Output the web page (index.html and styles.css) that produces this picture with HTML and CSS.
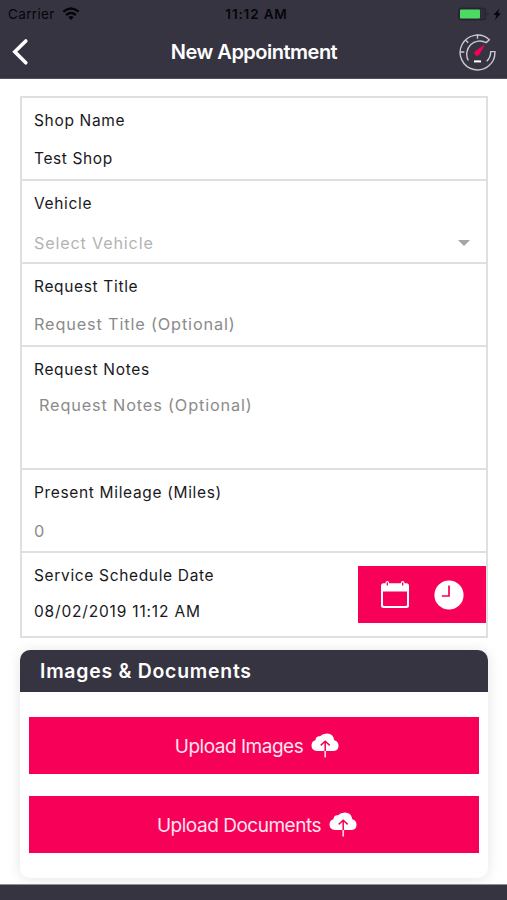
FILE: index.html
```html
<!DOCTYPE html>
<html lang="en">
<head>
<meta charset="utf-8">
<title>New Appointment</title>
<link rel="stylesheet" href="styles.css">
</head>
<body>
<header class="top">
  <div class="status">
    <div class="carrier"><span>Carrier</span>
      <svg width="18" height="14" viewBox="0 0 18 14" fill="none" stroke="#050507" stroke-width="2.4"><path d="M1.3 4.7Q9 -1.7 16.7 4.7"/><path d="M4.1 8Q9 3.8 13.9 8"/><path d="M6.3 10.2Q9 8 11.7 10.2L9 13Z" fill="#050507" stroke="none"/></svg>
    </div>
    <span class="clock">11:12 AM</span>
    <svg class="battery" width="44" height="14" viewBox="0 0 44 14"><rect x=".7" y="1.2" width="27" height="11.6" rx="2.5" fill="#302d38" stroke="#23212a"/><rect x="2" y="2.5" width="20" height="9" rx="1" fill="#4cd964"/><path d="M29.5 5q2 2 0 4z" fill="#23212a"/><path d="M41.5 1.5L35.5 8h3l-1.5 5 6-6.7h-3z" fill="#050507"/></svg>
  </div>
  <nav class="bar">
    <svg class="back" width="18" height="28" viewBox="0 0 18 28" fill="none" stroke="#fff" stroke-width="3.6" stroke-linecap="round"><path d="M14.8 3L3.8 13.8l11 11"/></svg>
    <h1>New Appointment</h1>
    <svg class="gauge" width="38" height="38" viewBox="0 0 38 38" fill="none" stroke="#c9c7d0" stroke-width="1.4"><path d="M10.3 27.5A13.2 13.2 0 0 1 28.2 9.6L31.3 6.7A17.4 17.4 0 1 0 36.9 18.6H32.7A13.4 13.4 0 0 1 28.7 28.2"/><path d="M19.5 1.6V5.8M2.1 19H6.3M7.2 6.7L10.2 9.7"/><path d="M26 12.5L16.5 19.2l1 2.8 3 .2z" fill="#f70057" stroke="#f70057" stroke-width="1"/><path d="M16 28.4H23" stroke="#fff" stroke-width="2"/></svg>
  </nav>
</header>
<main>
  <section class="form">
    <div class="row"><label>Shop Name</label><p class="value">Test Shop</p></div>
    <div class="row"><label>Vehicle</label><div class="value select"><span>Select Vehicle</span><i class="caret"></i></div></div>
    <div class="row"><label>Request Title</label><p class="value hint">Request Title (Optional)</p></div>
    <div class="row notes"><label>Request Notes</label><p class="value hint">Request Notes (Optional)</p></div>
    <div class="row mileage"><label>Present Mileage (Miles)</label><p class="value hint">0</p></div>
    <div class="row date">
      <div><label>Service Schedule Date</label><p class="value">08/02/2019 11:12 AM</p></div>
      <div class="pickers">
        <svg width="30" height="28" viewBox="0 0 30 28"><path fill="#fff" fill-rule="evenodd" d="M3.5 2.3H26.5Q29 2.3 29 5V24.5Q29 27 26.5 27H3.5Q1 27 1 24.5V5Q1 2.3 3.5 2.3ZM3 10.5V23.7Q3 25 4.3 25H25.7Q27 25 27 23.7V10.5Z"/><path d="M7.3 1.8V3.4M22.7 1.8V3.4" stroke="#fff" stroke-width="3.6" stroke-linecap="round"/><path d="M7.3 1.8V4M22.7 1.8V4" stroke="#f70057" stroke-width="1.3" stroke-linecap="round"/></svg>
        <svg width="30" height="30" viewBox="0 0 30 30"><circle cx="15" cy="15" r="14.6" fill="#fff"/><path d="M15 5.5V16H7.8" fill="none" stroke="#f70057" stroke-width="1.7"/></svg>
      </div>
    </div>
  </section>
  <section class="card">
    <h2>Images &amp; Documents</h2>
    <div class="actions">
      <div class="button"><span>Upload Images</span><svg width="28" height="25" viewBox="0 0 28 25"><path d="M6 18Q.5 17.4 .5 12.5.5 8.3 4.4 7.2 4.8 2.9 9 3.3 11.5.6 16 .6 22.4.8 23.3 7.2 27.5 8.6 27.5 12.7 27.5 17.4 22.8 18Z" fill="#fff"/><path d="M14.2 18V9M9.7 12.4L14.2 8.3l4.5 4.1" fill="none" stroke="#f70057" stroke-width="1.5"/><path d="M14.2 18V24.5" stroke="#ffc9dc" stroke-width="1.7"/></svg></div>
      <div class="button"><span>Upload Documents</span><svg width="28" height="25" viewBox="0 0 28 25"><path d="M6 18Q.5 17.4 .5 12.5.5 8.3 4.4 7.2 4.8 2.9 9 3.3 11.5.6 16 .6 22.4.8 23.3 7.2 27.5 8.6 27.5 12.7 27.5 17.4 22.8 18Z" fill="#fff"/><path d="M14.2 18V9M9.7 12.4L14.2 8.3l4.5 4.1" fill="none" stroke="#f70057" stroke-width="1.5"/><path d="M14.2 18V24.5" stroke="#ffc9dc" stroke-width="1.7"/></svg></div>
    </div>
  </section>
</main>
<footer></footer>
</body>
</html>
```
FILE: styles.css
```css
* { box-sizing: border-box; }
body { margin: 0; width: 507px; height: 900px; overflow: hidden; display: flex; flex-direction: column; background: #fff; font-family: Inter, "Liberation Sans", sans-serif; color: #19191b; }
h1, h2, p { margin: 0; }
svg { display: block; flex: none; }
.top { height: 79px; flex: none; background: #373442; border-bottom: 1px solid #55525f; }
.status { height: 27px; display: grid; grid-template-columns: 1fr auto 1fr; align-items: center; padding: 0 5px 0 8px; font-size: 13.5px; color: #050507; }
.carrier { display: flex; align-items: center; gap: 7px; letter-spacing: .35px; }
.clock { font-weight: 600; font-size: 13.5px; letter-spacing: .85px; padding-left: 3px; }
.battery { justify-self: end; }
.bar { height: 50px; display: grid; grid-template-columns: 1fr auto 1fr; align-items: center; padding: 0 11px; color: #fff; }
.bar h1 { font-size: 20px; font-weight: 600; letter-spacing: -.5px; padding-left: 1px; }
.gauge { justify-self: end; }
main { flex: 1; padding: 17px 19px 0 20px; }
.form { border: 2px solid #dfdfdf; }
.row { height: 83px; padding: 12px 12px 0; border-bottom: 2px solid #dfdfdf; }
label { display: block; font-size: 15.5px; line-height: 22px; letter-spacing: .66px; white-space: nowrap; }
.value { margin-top: 16px; font-size: 15.5px; line-height: 22px; letter-spacing: .6px; white-space: nowrap; }
.hint { color: #8b8b8b; font-size: 16.3px; letter-spacing: .85px; margin-top: 15px; }
.select { display: flex; justify-content: space-between; align-items: center; color: #b3b3b3; font-size: 16.2px; letter-spacing: .82px; margin-top: 17px; padding-right: 4px; }
.caret { border: 6px solid transparent; border-top-color: #a5a5a5; border-bottom: 0; }
.notes { height: 123px; }
.notes .value { margin: 13px 0 0 5px; }
.mileage .value { margin-top: 16px; }
.date { height: 83px; border-bottom: 0; display: flex; justify-content: space-between; padding-right: 0; }
.date .value { margin-top: 14px; letter-spacing: .82px; }
.pickers { width: 128px; height: 57px; margin-top: 1px; background: #f70057; display: flex; align-items: center; justify-content: center; gap: 24px; }
.card { height: 228px; margin-top: 12px; border-radius: 10px; background: #fff; box-shadow: 0 1px 14px rgba(0,0,0,.11); }
.card h2 { height: 42px; padding-left: 20px; background: #373442; color: #fff; border-radius: 10px 10px 0 0; font-size: 19.4px; font-weight: 600; line-height: 42px; letter-spacing: .77px; }
.actions { padding: 25px 9px 0; display: grid; gap: 22px; }
.button { height: 57px; display: flex; align-items: center; justify-content: center; gap: 8px; padding-left: 6px; background: #f70057; color: #ffe3ee; font-size: 19px; letter-spacing: -.48px; }
.button span { padding-top: 2px; }
footer { height: 16px; flex: none; background: #373442; border-top: 1px solid #8e9494; }
```
